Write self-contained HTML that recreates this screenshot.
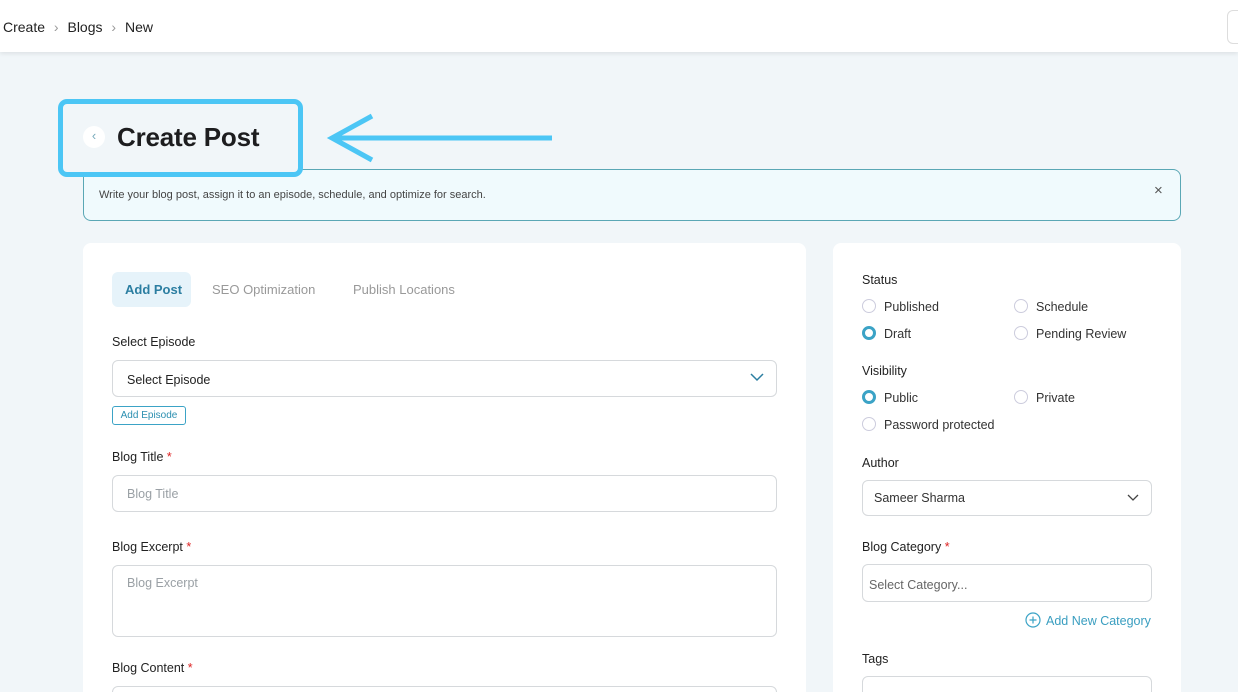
<!DOCTYPE html>
<html><head><meta charset="utf-8"><style>
*{box-sizing:border-box;margin:0;padding:0}
html,body{width:1238px;height:692px;overflow:hidden}
body{background:#f1f6f9;font-family:"Liberation Sans",sans-serif;color:#222;position:relative}
.a{position:absolute}
.hdr{left:0;top:0;width:1238px;height:52px;background:#fff;box-shadow:0 2px 4px rgba(0,0,0,.08)}
.card{background:#fff;border-radius:8px}
.lbl{font-size:12.5px;color:#222}
.inp{border:1px solid #d6d9dc;border-radius:6px;background:#fff}
.ph{font-size:12.5px;color:#9aa0a5}
.req{color:#d22}
.rad{width:14px;height:14px;border:1px solid #ccd;border-radius:50%}
.rad.on{border:3px solid #3ba3c6}
.rt{font-size:12.5px;color:#333}
</style></head><body>
<div class="a hdr"></div>
<div class="a" style="left:3px;top:19px;font-size:14px;color:#222">Create <span style="color:#999;margin:0 5px">›</span> Blogs <span style="color:#999;margin:0 5px">›</span> New</div>
<div class="a" style="left:1227px;top:10px;width:20px;height:34px;border:1px solid #ddd;border-radius:6px"></div>

<div class="a" style="left:83px;top:169px;width:1098px;height:52px;border:1px solid #5aa7b5;border-radius:8px;background:#f0fafd"></div>
<div class="a" style="left:99px;top:189px;font-size:11px;color:#444">Write your blog post, assign it to an episode, schedule, and optimize for search.</div>
<div class="a" style="left:1154px;top:182px;font-size:15px;color:#555">×</div>

<div class="a" style="left:58px;top:99px;width:245px;height:78px;border:5px solid #4cc6f5;border-radius:9px;background:#f1f6f9"></div>
<div class="a" style="left:83px;top:126px;width:22px;height:22px;border-radius:50%;background:#fff;color:#7ab;font-size:13px;text-align:center;line-height:20px">‹</div>
<div class="a" style="left:117px;top:122px;font-size:26px;font-weight:bold;color:#1d1d1f;letter-spacing:-0.2px">Create Post</div>
<svg class="a" style="left:320px;top:110px" width="240" height="58"><path d="M232 28H14M52 6L12 28L52 50" stroke="#4cc6f5" stroke-width="5" fill="none"/></svg>

<div class="a card" style="left:83px;top:243px;width:723px;height:470px"></div>
<div class="a" style="left:112px;top:272px;width:79px;height:35px;background:#e6f3fa;border-radius:6px"></div>
<div class="a" style="left:125px;top:282px;font-size:13px;color:#2b7ea1;font-weight:bold">Add Post</div>
<div class="a" style="left:212px;top:282px;font-size:13px;color:#999">SEO Optimization</div>
<div class="a" style="left:353px;top:282px;font-size:13px;color:#999">Publish Locations</div>
<div class="a lbl" style="left:112px;top:335px">Select Episode</div>
<div class="a inp" style="left:112px;top:360px;width:665px;height:37px"></div>
<div class="a lbl" style="left:127px;top:373px">Select Episode</div>
<svg class="a" style="left:750px;top:372px" width="14" height="10"><path d="M1 2l6 6 6-6" stroke="#2b7ea1" stroke-width="1.5" fill="none"/></svg>
<div class="a" style="left:112px;top:406px;width:74px;height:19px;border:1px solid #3ba3c6;border-radius:3px;font-size:10px;color:#2b8fb0;text-align:center;line-height:17px">Add Episode</div>
<div class="a lbl" style="left:112px;top:450px">Blog Title <span class="req">*</span></div>
<div class="a inp" style="left:112px;top:475px;width:665px;height:37px"></div>
<div class="a ph" style="left:127px;top:487px">Blog Title</div>
<div class="a lbl" style="left:112px;top:540px">Blog Excerpt <span class="req">*</span></div>
<div class="a inp" style="left:112px;top:565px;width:665px;height:72px"></div>
<div class="a ph" style="left:127px;top:576px">Blog Excerpt</div>
<div class="a lbl" style="left:112px;top:661px">Blog Content <span class="req">*</span></div>
<div class="a inp" style="left:112px;top:686px;width:665px;height:40px"></div>

<div class="a card" style="left:833px;top:243px;width:348px;height:470px"></div>
<div class="a lbl" style="left:862px;top:273px">Status</div>
<div class="a rad" style="left:862px;top:299px"></div><div class="a rt" style="left:884px;top:300px">Published</div>
<div class="a rad" style="left:1014px;top:299px"></div><div class="a rt" style="left:1036px;top:300px">Schedule</div>
<div class="a rad on" style="left:862px;top:326px"></div><div class="a rt" style="left:884px;top:327px">Draft</div>
<div class="a rad" style="left:1014px;top:326px"></div><div class="a rt" style="left:1036px;top:327px">Pending Review</div>
<div class="a lbl" style="left:862px;top:364px">Visibility</div>
<div class="a rad on" style="left:862px;top:390px"></div><div class="a rt" style="left:884px;top:391px">Public</div>
<div class="a rad" style="left:1014px;top:390px"></div><div class="a rt" style="left:1036px;top:391px">Private</div>
<div class="a rad" style="left:862px;top:417px"></div><div class="a rt" style="left:884px;top:418px">Password protected</div>
<div class="a lbl" style="left:862px;top:456px">Author</div>
<div class="a inp" style="left:862px;top:480px;width:290px;height:36px"></div>
<div class="a rt" style="left:874px;top:491px">Sameer Sharma</div>
<svg class="a" style="left:1127px;top:493px" width="12" height="9"><path d="M1 2l5 5 5-5" stroke="#444" stroke-width="1.3" fill="none"/></svg>
<div class="a lbl" style="left:862px;top:540px">Blog Category <span class="req">*</span></div>
<div class="a inp" style="left:862px;top:564px;width:290px;height:38px"></div>
<div class="a" style="left:869px;top:578px;font-size:12.5px;color:#666">Select Category...</div>
<svg class="a" style="left:1025px;top:612px" width="16" height="16"><circle cx="8" cy="8" r="7" stroke="#3ba3c6" fill="none" stroke-width="1.2"/><path d="M8 4.5v7M4.5 8h7" stroke="#3ba3c6" stroke-width="1.2"/></svg>
<div class="a" style="left:1046px;top:614px;font-size:12.5px;color:#3a9ec0">Add New Category</div>
<div class="a lbl" style="left:862px;top:652px">Tags</div>
<div class="a inp" style="left:862px;top:676px;width:290px;height:40px"></div>
</body></html>
